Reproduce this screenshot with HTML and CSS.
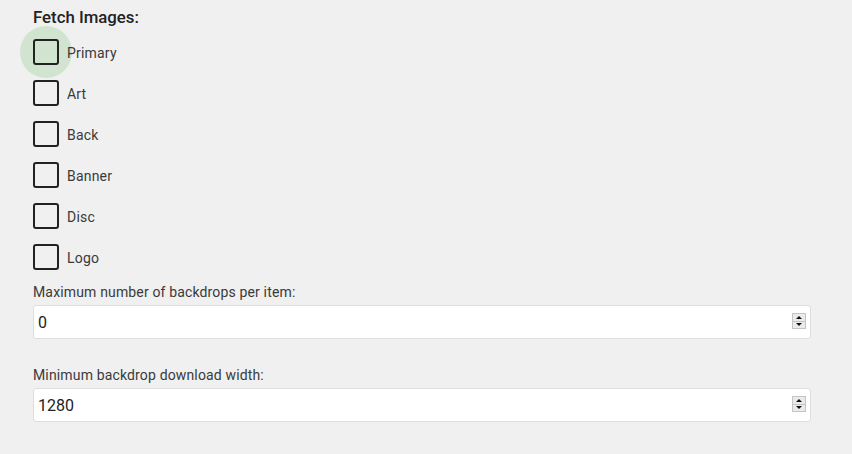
FILE: index.html
```html
<!DOCTYPE html>
<html>
<head>
<meta charset="utf-8">
<link rel="stylesheet" href="styles.css">
</head>
<body>
<div class="page">
  <h3 class="title">Fetch Images:</h3>
  <div class="checks">
    <label class="check"><span class="box-wrap"><span class="ripple"></span><span class="box"></span></span><span class="check-label">Primary</span></label>
    <label class="check"><span class="box-wrap"><span class="box"></span></span><span class="check-label">Art</span></label>
    <label class="check"><span class="box-wrap"><span class="box"></span></span><span class="check-label">Back</span></label>
    <label class="check"><span class="box-wrap"><span class="box"></span></span><span class="check-label">Banner</span></label>
    <label class="check"><span class="box-wrap"><span class="box"></span></span><span class="check-label">Disc</span></label>
    <label class="check"><span class="box-wrap"><span class="box"></span></span><span class="check-label">Logo</span></label>
  </div>
  <div class="field">
    <label class="field-label" for="f1">Maximum number of backdrops per item:</label>
    <div class="input-wrap">
      <input id="f1" class="num" type="number" value="0">
      <span class="spin"><span class="spin-up"></span><span class="spin-down"></span></span>
    </div>
  </div>
  <div class="field">
    <label class="field-label" for="f2">Minimum backdrop download width:</label>
    <div class="input-wrap">
      <input id="f2" class="num" type="number" value="1280">
      <span class="spin"><span class="spin-up"></span><span class="spin-down"></span></span>
    </div>
  </div>
</div>
</body>
</html>
```
FILE: styles.css
```css
html, body {
  margin: 0;
  padding: 0;
  background: #f0f0f0;
  font-family: Roboto, "Liberation Sans", sans-serif;
  color: #222;
}
.page {
  padding: 7px 41px 0 33px;
}
.title {
  margin: 0;
  font-size: 16.8px;
  font-weight: 500;
  line-height: 20px;
  color: #222;
}
.checks {
  display: flex;
  flex-direction: column;
  gap: 15px;
  margin-top: 12px;
}
.check {
  display: flex;
  align-items: center;
  gap: 8px;
  height: 26px;
}
.box-wrap {
  position: relative;
  width: 26px;
  height: 26px;
  flex: none;
}
.box {
  position: absolute;
  inset: 0;
  box-sizing: border-box;
  border: 2px solid #222;
  border-radius: 3px;
}
.ripple {
  position: absolute;
  left: -13px;
  top: -13px;
  width: 52px;
  height: 52px;
  border-radius: 50%;
  background: #d0e4cf;
}
.check-label {
  position: relative;
  font-size: 14px;
  color: #3a3a3a;
  letter-spacing: 0.2px;
  padding-top: 2px;
}
.field {
  display: flex;
  flex-direction: column;
  margin-top: 14px;
}
.field + .field {
  margin-top: 28px;
}
.field-label {
  font-size: 14px;
  line-height: 16px;
  letter-spacing: 0.15px;
  color: #3a3a3a;
  margin-bottom: 5px;
}
.input-wrap {
  position: relative;
}
.num {
  display: block;
  box-sizing: border-box;
  height: 34px;
  width: 100%;
  margin: 0;
  padding: 0 8px 0 4px;
  border: 1px solid #dedede;
  border-radius: 3px;
  background: #fff;
  font-family: Roboto, "Liberation Sans", sans-serif;
  font-size: 16px;
  color: #222;
  outline: none;
  -moz-appearance: textfield;
}
.num::-webkit-inner-spin-button,
.num::-webkit-outer-spin-button {
  -webkit-appearance: none;
  margin: 0;
}
.spin {
  position: absolute;
  right: 5px;
  top: 8px;
  width: 14px;
  height: 16px;
  box-sizing: border-box;
  border: 1px solid #c4c4c4;
  background: #ebebeb;
  display: flex;
  flex-direction: column;
}
.spin-up,
.spin-down {
  flex: 1;
  display: flex;
  align-items: center;
  justify-content: center;
}
.spin-up {
  border-bottom: 1px solid #c4c4c4;
}
.spin-up::before {
  content: "";
  border-left: 3px solid transparent;
  border-right: 3px solid transparent;
  border-bottom: 3px solid #111;
}
.spin-down::before {
  content: "";
  border-left: 3px solid transparent;
  border-right: 3px solid transparent;
  border-top: 3px solid #111;
}
```
